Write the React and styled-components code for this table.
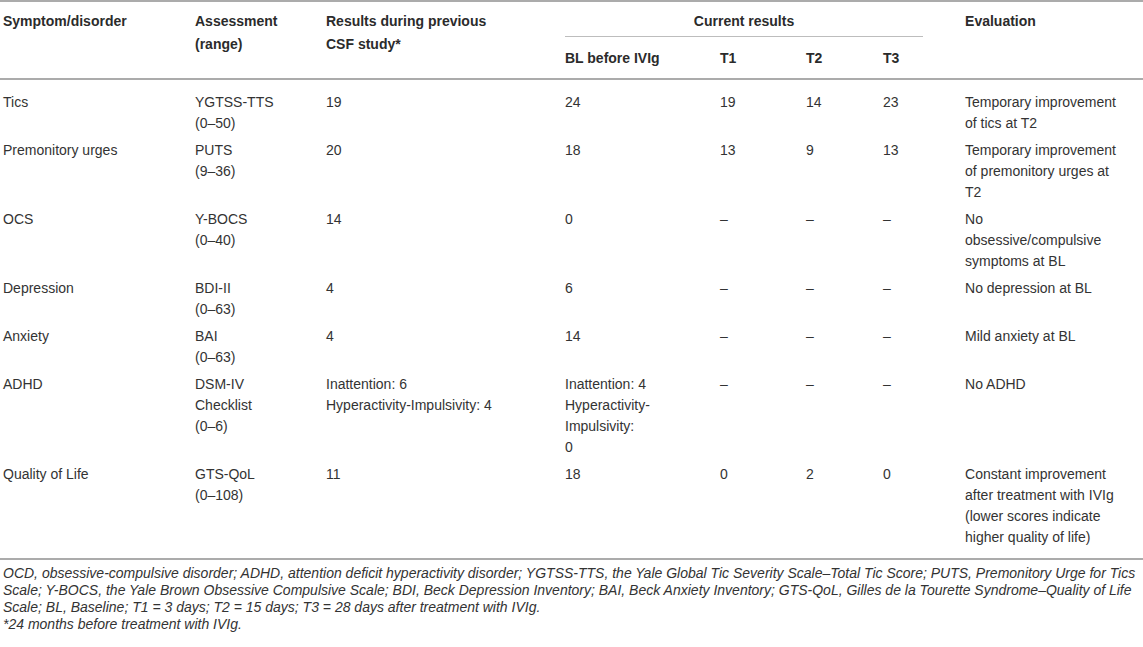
import React from 'react';
import styled, { createGlobalStyle } from 'styled-components';

const GlobalStyle = createGlobalStyle`
  body {
    margin: 0;
    background: #fff;
    font-family: 'Liberation Sans', Arial, sans-serif;
    color: #333;
  }
`;

const Page = styled.div`
  width: 1143px;
`;

const Table = styled.table`
  width: 1143px;
  table-layout: fixed;
  border-collapse: collapse;
  font-size: 14px;
  line-height: 21px;
  border-top: 2px solid #ababab;
`;

const Head = styled.thead`
  border-bottom: 2px solid #ababab;
`;

const Body = styled.tbody`
  border-bottom: 2px solid #ababab;
`;

const HeadCell = styled.th`
  text-align: left;
  vertical-align: top;
  font-weight: bold;
  line-height: 23px;
  color: #2b2b2b;
  padding: ${({ $sub }) => ($sub ? '10px 8px 8px 3px' : '8px 8px 3px 3px')};
`;

const GroupCell = styled.th`
  text-align: center;
  vertical-align: top;
  font-weight: bold;
  line-height: 23px;
  color: #2b2b2b;
  padding: 8px 39px 0 3px;
`;

const GroupLabel = styled.div`
  padding-bottom: 3px;
  border-bottom: 1px solid #bdbdbd;
`;

const Row = styled.tr`
  &:first-child td {
    padding-top: 12px;
  }
  &:last-child td {
    padding-bottom: 10px;
  }
`;

const Cell = styled.td`
  vertical-align: top;
  padding: 3px 8px 3px 3px;
  white-space: nowrap;
  color: #333;
`;

const Notes = styled.div`
  padding: 5px 0 0 3px;
  font-size: 14px;
  line-height: 17px;
  font-style: italic;
  color: #333;
  white-space: nowrap;
`;

const widths = [192, 131, 239, 155, 86, 77, 82, 181];

const rows = [
  {
    id: 'tics',
    cells: [
      ['Tics'],
      ['YGTSS-TTS', '(0–50)'],
      ['19'],
      ['24'],
      ['19'],
      ['14'],
      ['23'],
      ['Temporary improvement', 'of tics at T2'],
    ],
  },
  {
    id: 'urges',
    cells: [
      ['Premonitory urges'],
      ['PUTS', '(9–36)'],
      ['20'],
      ['18'],
      ['13'],
      ['9'],
      ['13'],
      ['Temporary improvement', 'of premonitory urges at', 'T2'],
    ],
  },
  {
    id: 'ocs',
    cells: [
      ['OCS'],
      ['Y-BOCS', '(0–40)'],
      ['14'],
      ['0'],
      ['–'],
      ['–'],
      ['–'],
      ['No', 'obsessive/compulsive', 'symptoms at BL'],
    ],
  },
  {
    id: 'depression',
    cells: [
      ['Depression'],
      ['BDI-II', '(0–63)'],
      ['4'],
      ['6'],
      ['–'],
      ['–'],
      ['–'],
      ['No depression at BL'],
    ],
  },
  {
    id: 'anxiety',
    cells: [
      ['Anxiety'],
      ['BAI', '(0–63)'],
      ['4'],
      ['14'],
      ['–'],
      ['–'],
      ['–'],
      ['Mild anxiety at BL'],
    ],
  },
  {
    id: 'adhd',
    cells: [
      ['ADHD'],
      ['DSM-IV', 'Checklist', '(0–6)'],
      ['Inattention: 6', 'Hyperactivity-Impulsivity: 4'],
      ['Inattention: 4', 'Hyperactivity-', 'Impulsivity:', '0'],
      ['–'],
      ['–'],
      ['–'],
      ['No ADHD'],
    ],
  },
  {
    id: 'qol',
    cells: [
      ['Quality of Life'],
      ['GTS-QoL', '(0–108)'],
      ['11'],
      ['18'],
      ['0'],
      ['2'],
      ['0'],
      [
        'Constant improvement',
        'after treatment with IVIg',
        '(lower scores indicate',
        'higher quality of life)',
      ],
    ],
  },
];

const Lines = ({ lines }) =>
  lines.map((line, i) => (
    <React.Fragment key={line + i}>
      {i > 0 && <br />}
      {line}
    </React.Fragment>
  ));

const App = () => (
  <Page>
    <GlobalStyle />
    <Table>
      <colgroup>
        {widths.map((w, i) => (
          <col key={i} style={{ width: w }} />
        ))}
      </colgroup>
      <Head>
        <tr>
          <HeadCell rowSpan={2}>Symptom/disorder</HeadCell>
          <HeadCell rowSpan={2}>
            Assessment
            <br />
            (range)
          </HeadCell>
          <HeadCell rowSpan={2}>
            Results during previous
            <br />
            CSF study*
          </HeadCell>
          <GroupCell colSpan={4}>
            <GroupLabel>Current results</GroupLabel>
          </GroupCell>
          <HeadCell rowSpan={2}>Evaluation</HeadCell>
        </tr>
        <tr>
          <HeadCell $sub>BL before IVIg</HeadCell>
          <HeadCell $sub>T1</HeadCell>
          <HeadCell $sub>T2</HeadCell>
          <HeadCell $sub>T3</HeadCell>
        </tr>
      </Head>
      <Body>
        {rows.map(row => (
          <Row key={row.id}>
            {row.cells.map((lines, i) => (
              <Cell key={i}>
                <Lines lines={lines} />
              </Cell>
            ))}
          </Row>
        ))}
      </Body>
    </Table>
    <Notes>
      OCD, obsessive-compulsive disorder; ADHD, attention deficit hyperactivity
      disorder; YGTSS-TTS, the Yale Global Tic Severity Scale–Total Tic Score;
      PUTS, Premonitory Urge for Tics
      <br />
      Scale; Y-BOCS, the Yale Brown Obsessive Compulsive Scale; BDI, Beck
      Depression Inventory; BAI, Beck Anxiety Inventory; GTS-QoL, Gilles de la
      Tourette Syndrome–Quality of Life
      <br />
      Scale; BL, Baseline; T1 = 3 days; T2 = 15 days; T3 = 28 days after
      treatment with IVIg.
      <br />
      *24 months before treatment with IVIg.
    </Notes>
  </Page>
);

export default App;
